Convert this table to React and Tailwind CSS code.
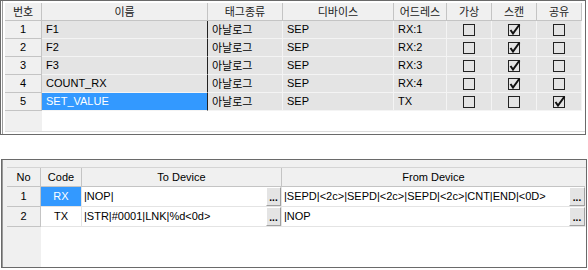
import React from 'react'

const TAGS = [
  { no: 1, name: 'F1', kind: '아날로그', dev: 'SEP', addr: 'RX:1', virt: false, scan: true, share: false },
  { no: 2, name: 'F2', kind: '아날로그', dev: 'SEP', addr: 'RX:2', virt: false, scan: true, share: false },
  { no: 3, name: 'F3', kind: '아날로그', dev: 'SEP', addr: 'RX:3', virt: false, scan: true, share: false },
  { no: 4, name: 'COUNT_RX', kind: '아날로그', dev: 'SEP', addr: 'RX:4', virt: false, scan: true, share: false },
  { no: 5, name: 'SET_VALUE', kind: '아날로그', dev: 'SEP', addr: 'TX', virt: false, scan: false, share: true, selected: true },
]

const CMDS = [
  { no: 1, code: 'RX', to: '|NOP|', from: '|SEPD|<2c>|SEPD|<2c>|SEPD|<2c>|CNT|END|<0D>', selected: true },
  { no: 2, code: 'TX', to: '|STR|#0001|LNK|%d<0d>', from: '|NOP' },
]

const topCols = 'grid-cols-[37px_166px_75px_111px_53px_45px_45px_45px]'
const botCols = 'grid-cols-[34px_41px_184px_16px_287px_16px]'

function Check({ on }) {
  return (
    <svg width="14" height="14" viewBox="0 0 14 14">
      <rect x="1.5" y="1.5" width="11" height="11" fill="none" stroke="#222" strokeWidth="1" />
      {on && <path d="M3.5 7 L6 10.5 L12.5 1.5" fill="none" stroke="#111" strokeWidth="2" />}
    </svg>
  )
}

function Dots() {
  return (
    <div className="h-full bg-[#e4e4e4] border-t border-l border-white border-r border-b border-r-[#a0a0a0] border-b-[#a0a0a0] flex items-end justify-center pb-[2px] text-[10px] leading-none font-bold">
      ...
    </div>
  )
}

export default function App() {
  return (
    <div className="w-[588px] h-[270px] bg-white text-black text-[11px] font-['Liberation_Sans','Noto_Sans_CJK_KR',sans-serif]">

      {/* 태그 목록 */}
      <div className="w-[586px] h-[135px] border border-[#6a6a6a] bg-white">
        <div className="h-full ml-[1px] border-l border-[#9a9a9a] pl-[2px] pt-[2px] flex flex-col">
          <div className={`grid ${topCols} h-[18px] font-['Noto_Sans_CJK_KR',sans-serif]`}>
            {['번호', '이름', '태그종류', '디바이스', '어드레스', '가상', '스캔', '공유'].map(h => (
              <div key={h} className="bg-[#f0f0f0] border-r border-b border-[#c4c4c4] flex items-center justify-center leading-none text-[#222]">
                {h}
              </div>
            ))}
          </div>
          {TAGS.map(t => (
            <div key={t.no} className={`grid ${topCols} h-[18px]`}>
              <div className="bg-[#f0f0f0] border-r border-b border-[#c4c4c4] flex items-center justify-center">{t.no}</div>
              <div className={`border-r border-b border-[#f4f4f4] border-r-[#222] flex items-center pl-[4px] ${t.selected ? 'bg-[#3399ff] text-white' : 'bg-[#e4e4e4]'}`}>{t.name}</div>
              <div className="bg-[#e4e4e4] border-r border-b border-[#f4f4f4] flex items-center pl-[4px] font-['Noto_Sans_CJK_KR',sans-serif]">{t.kind}</div>
              <div className="bg-[#e4e4e4] border-r border-b border-[#f4f4f4] flex items-center pl-[4px]">{t.dev}</div>
              <div className="bg-[#e4e4e4] border-r border-b border-[#f4f4f4] flex items-center pl-[4px]">{t.addr}</div>
              <div className="bg-[#e4e4e4] border-r border-b border-[#f4f4f4] flex items-center justify-center"><Check on={t.virt} /></div>
              <div className="bg-[#e4e4e4] border-r border-b border-[#f4f4f4] flex items-center justify-center"><Check on={t.scan} /></div>
              <div className="bg-[#e4e4e4] border-r border-b border-[#f4f4f4] flex items-center justify-center"><Check on={t.share} /></div>
            </div>
          ))}
          <div className="flex-1 flex border-b border-[#dcdcdc] mb-[2px]">
            <div className="w-[37px] bg-[#f0f0f0]" />
            <div className="flex-1 bg-white" />
          </div>
        </div>
      </div>

      <div className="h-[24px]" />

      {/* 명령 목록 */}
      <div className="w-[586px] h-[109px] ml-[1px] border border-[#6a6a6a] bg-[#f0f0f0]">
        <div className="h-full border-l border-[#9a9a9a] flex flex-col pl-[4px] pt-[7px]">
          <div className={`grid ${botCols} h-[20px] border-t border-[#d4d4d4]`}>
            <div className="border-r border-b border-[#c4c4c4] flex items-center justify-center">No</div>
            <div className="border-r border-b border-[#c4c4c4] flex items-center justify-center">Code</div>
            <div className="col-span-2 border-r border-b border-[#c4c4c4] flex items-center justify-center">To Device</div>
            <div className="col-span-2 border-b border-[#c4c4c4] flex items-center justify-center">From Device</div>
          </div>
          {CMDS.map(c => (
            <div key={c.no} className={`grid ${botCols} h-[20px]`}>
              <div className="border-r border-b border-[#c4c4c4] flex items-center justify-center">{c.no}</div>
              <div className={`border-r border-b border-[#e4e4e4] flex items-center justify-center ${c.selected ? 'bg-[#3399ff] text-white' : 'bg-white'}`}>{c.code}</div>
              <div className="bg-white border-b border-[#e4e4e4] flex items-center pl-[2px] whitespace-nowrap overflow-hidden">{c.to}</div>
              <div className="bg-white border-r border-b border-[#e4e4e4]"><Dots /></div>
              <div className="bg-white border-b border-[#e4e4e4] flex items-center pl-[2px] whitespace-nowrap overflow-hidden">{c.from}</div>
              <div className="bg-white border-b border-[#e4e4e4]"><Dots /></div>
            </div>
          ))}
          <div className="flex-1 flex">
            <div className="w-[34px]" />
            <div className="flex-1 bg-white" />
          </div>
        </div>
      </div>

    </div>
  )
}
